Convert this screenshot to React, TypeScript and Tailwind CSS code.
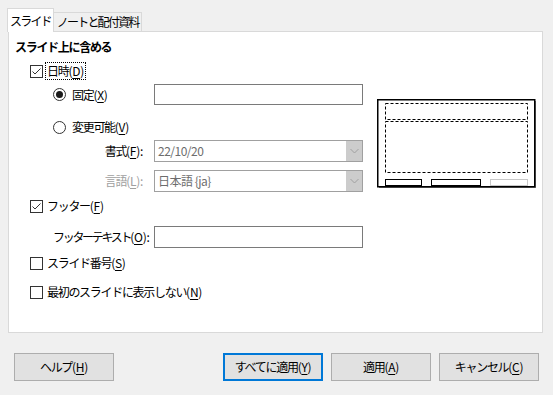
import React from "react";

function CheckBox({ checked }: { checked?: boolean }) {
  return (
    <span className="w-[13px] h-[13px] border border-[#333333] bg-white flex items-center justify-center shrink-0">
      {checked && (
        <svg width="11" height="11" viewBox="0 0 11 11">
          <path d="M1.5 5.5 L4 8 L9.5 2.5" fill="none" stroke="#333" strokeWidth="1" />
        </svg>
      )}
    </span>
  );
}

function Radio({ checked }: { checked?: boolean }) {
  return (
    <span className="w-[13px] h-[13px] rounded-full border border-[#333333] bg-white flex items-center justify-center shrink-0">
      {checked && <span className="w-[7px] h-[7px] rounded-full bg-[#1a1a1a]" />}
    </span>
  );
}

function Select({ value }: { value: string }) {
  return (
    <div className="w-[209px] h-[22px] border border-[#a0a0a0] bg-white flex items-stretch">
      <span className="flex-1 pl-[3px] flex items-center text-[#6d6d6d] tracking-[-0.5px]">{value}</span>
      <span className="w-[16px] bg-[#cccccc] flex items-center justify-center">
        <svg width="9" height="6" viewBox="0 0 9 6">
          <path d="M0.5 1 L4.5 5 L8.5 1" fill="none" stroke="#a0a0a0" strokeWidth="1" />
        </svg>
      </span>
    </div>
  );
}

// access key in brackets, e.g. (D)
function Key({ k, colon }: { k: string; colon?: boolean }) {
  return (
    <span className="tracking-[-0.3px]">
      (<span className="underline underline-offset-2">{k}</span>){colon ? ":" : ""}
    </span>
  );
}

function Preview() {
  return (
    <svg width="160" height="90" viewBox="0 0 160 90">
      <rect x="2" y="2" width="157" height="87" fill="#7a7a7a" />
      <rect x="0.75" y="0.75" width="157" height="87" fill="#fff" stroke="#000" strokeWidth="1.5" />
      <rect x="8.5" y="4.5" width="142" height="16" fill="none" stroke="#000" strokeDasharray="3 2" />
      <rect x="8.5" y="22.5" width="142" height="51" fill="none" stroke="#000" strokeDasharray="3 2" />
      <rect x="8.5" y="80.5" width="36" height="6" fill="none" stroke="#000" />
      <rect x="54.5" y="80.5" width="49" height="6" fill="none" stroke="#000" />
      <rect x="113.5" y="80.5" width="37" height="6" fill="none" stroke="#c8c8c8" />
    </svg>
  );
}

function Btn({ children, primary }: { children: React.ReactNode; primary?: boolean }) {
  return (
    <button
      className={
        primary
          ? "w-[100px] h-[28px] bg-[#e1e1e1] border-2 border-[#0078d7] flex items-center justify-center whitespace-nowrap"
          : "w-[100px] h-[28px] bg-[#e1e1e1] border border-[#adadad] flex items-center justify-center whitespace-nowrap"
      }
    >
      {children}
    </button>
  );
}

export default function App() {
  return (
    <div className="w-[553px] h-[395px] bg-[#f0f0f0] text-[12px] leading-none tracking-[-1.3px] whitespace-nowrap text-black font-['Noto_Sans_CJK_JP',sans-serif] flex flex-col">
      {/* tabs */}
      <div className="flex items-end pl-[7px] pt-[8px] relative z-10 tracking-[-1.8px]">
        <div className="h-[24px] px-[2px] -mb-px bg-white border border-b-0 border-[#d9d9d9] flex items-center justify-center">
          スライド
        </div>
        <div className="h-[19px] px-[3px] bg-[#f0f0f0] border border-l-0 border-b-0 border-[#d9d9d9] flex items-center justify-center">
          ノートと配付資料
        </div>
      </div>

      {/* panel */}
      <div className="ml-[8px] w-[535px] h-[302px] bg-white border border-[#d9d9d9] flex">
        <div className="w-[354px] flex flex-col pt-[5px]">
          <div className="h-[20px] pl-[6px] flex items-center font-bold">スライド上に含める</div>

          <div className="mt-[4px] h-[20px] pl-[21px] flex items-center gap-[2px]">
            <CheckBox checked />
            <span className="border border-dotted border-black px-px py-[2px]">
              日時<Key k="D" />
            </span>
          </div>

          <div className="mt-[3px] h-[21px] grid grid-cols-[145px_209px]">
            <div className="pl-[44px] flex items-center gap-[6px]">
              <Radio checked />
              <span>
                固定<Key k="X" />
              </span>
            </div>
            <div className="border border-[#7a7a7a] bg-white" />
          </div>

          <div className="mt-[12px] h-[20px] pl-[44px] flex items-center gap-[6px]">
            <Radio />
            <span>
              変更可能<Key k="V" />
            </span>
          </div>

          <div className="mt-[3px] h-[22px] grid grid-cols-[145px_209px]">
            <div className="pr-[11px] flex items-center justify-end">
              書式<Key k="F" colon />
            </div>
            <Select value="22/10/20" />
          </div>

          <div className="mt-[8px] h-[22px] grid grid-cols-[145px_209px]">
            <div className="pr-[11px] flex items-center justify-end text-[#a0a0a0]">
              言語<Key k="L" colon />
            </div>
            <Select value="日本語 {ja}" />
          </div>

          <div className="mt-[4px] h-[20px] pl-[21px] flex items-center gap-[4px]">
            <CheckBox checked />
            <span>
              フッター<Key k="F" />
            </span>
          </div>

          <div className="mt-[10px] h-[22px] grid grid-cols-[145px_209px]">
            <div className="pl-[44px] flex items-center tracking-[-2.3px]">
              フッターテキスト<Key k="O" colon />
            </div>
            <div className="border border-[#7a7a7a] bg-white" />
          </div>

          <div className="mt-[5px] h-[20px] pl-[21px] flex items-center gap-[4px]">
            <CheckBox />
            <span>
              スライド番号<Key k="S" />
            </span>
          </div>

          <div className="mt-[9px] h-[20px] pl-[21px] flex items-center gap-[4px]">
            <CheckBox />
            <span>
              最初のスライドに表示しない<Key k="N" />
            </span>
          </div>
        </div>

        <div className="ml-[14px] mt-[67px]">
          <Preview />
        </div>
      </div>

      {/* buttons */}
      <div className="mt-[20px] flex pl-[14px] pr-[14px]">
        <Btn>
          ヘルプ<Key k="H" />
        </Btn>
        <div className="ml-auto flex gap-[8px]">
          <Btn primary>
            すべてに適用<Key k="Y" />
          </Btn>
          <Btn>
            適用<Key k="A" />
          </Btn>
          <Btn>
            キャンセル<Key k="C" />
          </Btn>
        </div>
      </div>
    </div>
  );
}
